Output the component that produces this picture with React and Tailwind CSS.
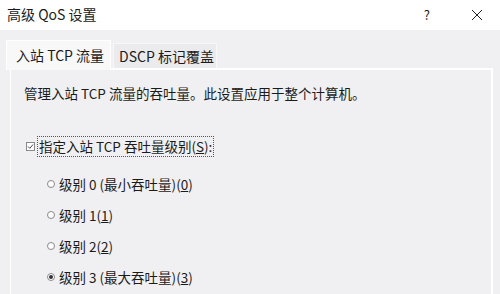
import React from "react";

const font = { fontFamily: '"Noto Sans CJK SC", "Noto Sans", sans-serif' };

function Radio({ checked, children }) {
  return (
    <div className="flex items-center h-[20px]">
      <span className="w-[8px] h-[8px] rounded-full border border-[#8a8a8a] bg-white flex items-center justify-center ml-[2px] mr-[4px]">
        {checked && <span className="w-[4px] h-[4px] rounded-full bg-[#333]" />}
      </span>
      <span>{children}</span>
    </div>
  );
}

export default function App() {
  return (
    <div className="w-[500px] h-[294px] overflow-hidden bg-[#f0f0f2] text-[#1b1b1b]" style={font}>
      {/* title bar */}
      <div className="h-[30px] bg-white flex items-center pl-[7px] pr-[14px] text-[14px]">
        <span className="flex-1 pb-[1px]">高级 QoS 设置</span>
        <span className="text-[13px] mr-[41px]">?</span>
        <svg width="12" height="12" viewBox="0 0 12 12" className="mr-[3px]">
          <path d="M1 1 L11 11 M11 1 L1 11" stroke="#222" strokeWidth="1" fill="none" />
        </svg>
      </div>

      {/* tabs */}
      <div className="flex items-end pl-[6px] pt-[10px] text-[14px] relative z-10">
        <div className="w-[105px] h-[30px] bg-[#f8f8f9] border-t border-l border-r border-white flex items-center pl-[9px] -mb-[2px]">
          入站 TCP 流量
        </div>
        <div className="w-[104px] h-[25px] bg-[#ebebed] border border-[#f7f7f8] border-b-0 flex items-center pl-[5px] ml-[2px]">
          DSCP 标记覆盖
        </div>
      </div>

      {/* panel */}
      <div className="ml-[10px] w-[483px] h-[240px] border-t-2 border-l border-r-2 border-white pl-[13px] pt-[13px] text-[13.5px]">
        <p className="h-[20px] leading-[20px]">管理入站 TCP 流量的吞吐量。此设置应用于整个计算机。</p>

        <div className="flex items-center mt-[32px] h-[22px]">
          <span className="w-[9px] h-[9px] border border-[#8a8a8a] bg-white flex items-center justify-center mr-[2px] ml-[2px]">
            <svg width="7" height="7" viewBox="0 0 7 7">
              <path d="M1 3.5 L2.8 5.3 L6 1.5" stroke="#444" strokeWidth="1" fill="none" />
            </svg>
          </span>
          <span className="border border-dotted border-[#555] px-[1px] h-[21px] flex items-center">
            指定入站 TCP 吞吐量级别(<span className="underline">S</span>):
          </span>
        </div>

        <div className="pl-[21px] mt-[17px] flex flex-col gap-[11px]">
          <Radio>
            级别 0 (最小吞吐量)(<span className="underline">0</span>)
          </Radio>
          <Radio>
            级别 1(<span className="underline">1</span>)
          </Radio>
          <Radio>
            级别 2(<span className="underline">2</span>)
          </Radio>
          <Radio checked>
            级别 3 (最大吞吐量)(<span className="underline">3</span>)
          </Radio>
        </div>
      </div>
    </div>
  );
}
